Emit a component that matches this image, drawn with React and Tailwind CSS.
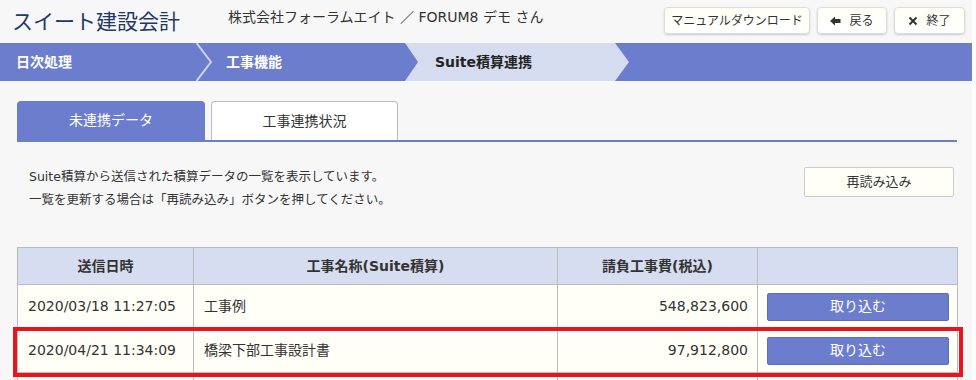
import React from "react";

const FONT = { fontFamily: '"DejaVu Sans", "Noto Sans CJK JP", sans-serif' };

const rows = [
  { date: "2020/03/18 11:27:05", name: "工事例", cost: "548,823,600" },
  { date: "2020/04/21 11:34:09", name: "橋梁下部工事設計書", cost: "97,912,800" },
  { date: "", name: "", cost: "" },
];

function TopButton({ children, className = "" }) {
  return (
    <button
      type="button"
      className={`h-[27px] flex items-center justify-center gap-2 rounded-[4px] border border-[#dcdcdc] bg-gradient-to-b from-[#fffff6] to-[#ffffff] text-[12px] text-[#333] shadow-[0_1px_2px_rgba(0,0,0,0.18)] ${className}`}
    >
      {children}
    </button>
  );
}

export default function App() {
  return (
    <div className="relative w-[976px] h-[380px] overflow-hidden bg-[#fcfcfc]" style={FONT}>
      <div className="w-[972px] h-full bg-[#f7f7f7]">
        {/* Header */}
        <div className="h-[43px] flex items-start">
          <div className="pl-[12px] pt-[7px] text-[21px] leading-[30px] text-[#1f3864]">
            スイート建設会計
          </div>
          <div className="ml-[48px] pt-[7px] text-[14px] leading-[20px] text-[#333]">
            株式会社フォーラムエイト ／ FORUM8 デモ さん
          </div>
          <div className="ml-auto mr-[7px] mt-[7px] flex gap-[7px]">
            <TopButton className="w-[146px]">マニュアルダウンロード</TopButton>
            <TopButton className="w-[70px]">
              <svg width="11" height="10" viewBox="0 0 11 10">
                <path d="M0 5 L5 0.5 V3 H10.5 V7 H5 V9.5 Z" fill="#333" />
              </svg>
              戻る
            </TopButton>
            <TopButton className="w-[71px]">
              <svg width="10" height="10" viewBox="0 0 10 10">
                <path d="M1.5 1.5 L8.5 8.5 M8.5 1.5 L1.5 8.5" stroke="#333" strokeWidth="2" />
              </svg>
              終了
            </TopButton>
          </div>
        </div>

        {/* Breadcrumb nav */}
        <div className="h-[38px] flex bg-[#6b7dcc] text-[14px] font-bold">
          <div className="w-[196px] flex items-center pl-[16px] text-white">日次処理</div>
          <svg width="16" height="38" viewBox="0 0 16 38" className="shrink-0">
            <path d="M0.5 0 L15 19 L0.5 38" fill="none" stroke="#cdd3f0" strokeWidth="2" />
          </svg>
          <div className="w-[193px] flex items-center pl-[14px] text-white">工事機能</div>
          <div className="w-[224px] flex items-center pl-[30px] text-[#222] bg-[#d6dcf0] [clip-path:polygon(0_0,210px_0,224px_50%,210px_100%,0_100%,13px_50%)]">
            Suite積算連携
          </div>
        </div>

        {/* Content */}
        <div className="pl-[17px] pr-[15px] pt-[20px]">
          {/* Tabs */}
          <div className="flex gap-[6px] border-b-2 border-[#6b7dcc]">
            <div className="w-[188px] h-[39px] flex items-center justify-center rounded-t-[4px] bg-[#6b7dcc] text-[14px] text-white">
              未連携データ
            </div>
            <div className="w-[187px] h-[39px] flex items-center justify-center rounded-t-[4px] border border-b-0 border-[#bbbbbb] bg-white text-[14px] text-[#333]">
              工事連携状況
            </div>
          </div>

          {/* Description */}
          <div className="mt-[23px] flex items-start">
            <div className="pl-[12px] text-[12.5px] leading-[23px] text-[#333]">
              <div>Suite積算から送信された積算データの一覧を表示しています。</div>
              <div>一覧を更新する場合は「再読み込み」ボタンを押してください。</div>
            </div>
            <button
              type="button"
              className="ml-auto mr-[3px] mt-[2px] w-[150px] h-[30px] rounded-[2px] border border-[#cccccc] bg-[#fffff8] text-[13px] text-[#333]"
            >
              再読み込み
            </button>
          </div>

          {/* Table */}
          <table className="mt-[36px] w-[940px] border-collapse table-fixed text-[14px] text-[#333]">
            <colgroup>
              <col className="w-[176px]" />
              <col className="w-[364px]" />
              <col className="w-[200px]" />
              <col className="w-[200px]" />
            </colgroup>
            <thead>
              <tr className="h-[37px] bg-[#d7ddf0]">
                <th className="border border-[#bbbbbb] font-bold">送信日時</th>
                <th className="border border-[#bbbbbb] font-bold">工事名称(Suite積算)</th>
                <th className="border border-[#bbbbbb] font-bold">請負工事費(税込)</th>
                <th className="border border-[#bbbbbb]"></th>
              </tr>
            </thead>
            <tbody>
              {rows.map((r, i) => (
                <tr key={i} className="h-[44px] bg-[#fffff7]">
                  <td className="border border-[#bbbbbb] pl-[10px] whitespace-nowrap">{r.date}</td>
                  <td className="border border-[#bbbbbb] pl-[10px]">{r.name}</td>
                  <td className="border border-[#bbbbbb] pr-[9px] text-right">{r.cost}</td>
                  <td className="border border-[#bbbbbb] pl-[9px] pr-[8px]">
                    {r.date && (
                      <button
                        type="button"
                        className="w-full h-[28px] rounded-[2px] border border-[#5b6dc0] bg-[#6b7dcc] text-[14px] text-white"
                      >
                        取り込む
                      </button>
                    )}
                  </td>
                </tr>
              ))}
            </tbody>
          </table>
        </div>
      </div>

      {/* Highlight annotation */}
      <div className="absolute left-[13px] top-[327px] w-[950px] h-[50px] border-[4px] border-[#e8141e] pointer-events-none" />
    </div>
  );
}
